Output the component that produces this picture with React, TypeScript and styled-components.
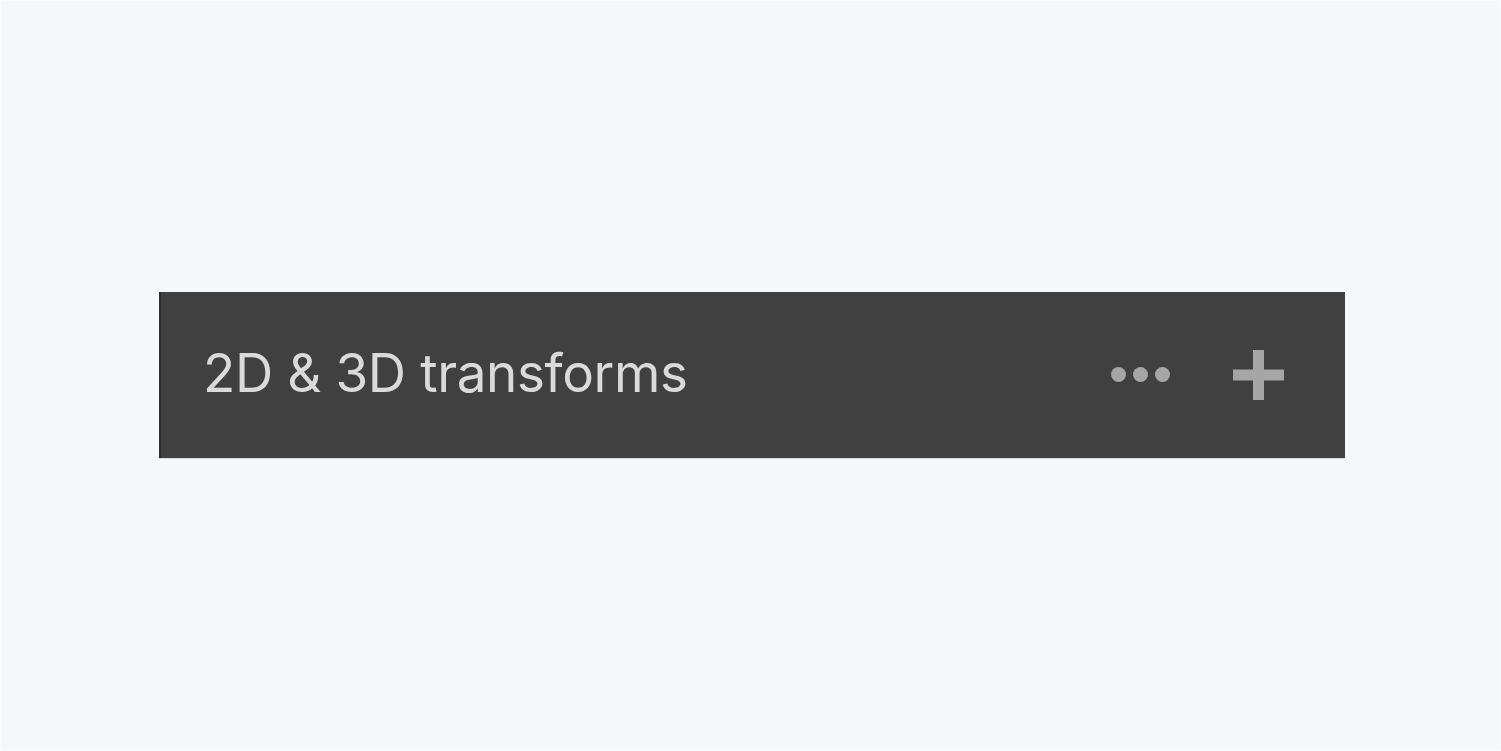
import styled, { createGlobalStyle } from 'styled-components';

const Global = createGlobalStyle`
	html, body {
		margin: 0;
		padding: 0;
		background: #f6f7f9;
	}
	#root {
		height: 751px;
	}
`

const Page = styled.div`
	display: flex;
	align-items: center;
	justify-content: center;
	height: 100%;
	padding: 0 0 2px 3px;
	box-sizing: border-box;
	border: 1px solid #fbfbfc;
`

const Header = styled.div`
	display: flex;
	align-items: center;
	justify-content: space-between;
	width: 1186px;
	height: 166px;
	box-sizing: border-box;
	padding: 0 61px 0 42px;
	background: #404040;
	border-left: 2px solid #2e2e2e;
	box-shadow: 0 1px 0 #dcdcdc;
`

const Title = styled.span`
	font-family: Inter, "Noto Sans", sans-serif;
	font-size: 53px;
	color: #dadada;
	letter-spacing: -0.4px;
	padding-bottom: 4px;
`

const Actions = styled.div`
	display: flex;
	align-items: center;
	gap: 63px;
`

const Dots = styled.div`
	display: flex;
	gap: 7px;
`

const Dot = styled.span`
	width: 15px;
	height: 15px;
	border-radius: 50%;
	background: #a6a6a6;
`

const Plus = () => (
	<svg width="51" height="50" viewBox="0 0 51 50">
		<rect x="0" y="19.5" width="51" height="11" fill="#a6a6a6" />
		<rect x="20" y="0" width="11" height="50" fill="#a6a6a6" />
	</svg>
);

const App = () => {
	return(
		<>
			<Global />
			<Page>
				<Header>
					<Title>2D &amp; 3D transforms</Title>
					<Actions>
						<Dots>
							<Dot />
							<Dot />
							<Dot />
						</Dots>
						<Plus />
					</Actions>
				</Header>
			</Page>
		</>
	);
}

export default App;
